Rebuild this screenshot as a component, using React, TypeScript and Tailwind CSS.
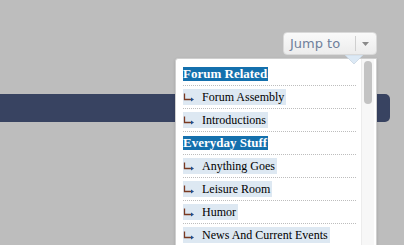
import React from "react";

/* =========================
   DATA
========================= */
const nodes = [
  { title: "Forum Related", kind: "cat" },
  { title: "Forum Assembly", kind: "forum" },
  { title: "Introductions", kind: "forum" },
  { title: "Everyday Stuff", kind: "cat" },
  { title: "Anything Goes", kind: "forum" },
  { title: "Leisure Room", kind: "forum" },
  { title: "Humor", kind: "forum" },
  { title: "News And Current Events", kind: "forum" },
];

/* =========================
   ICONS
========================= */
const ChildArrow = () => (
  <svg width="12" height="9" viewBox="0 0 12 9" className="shrink-0">
    <path d="M1.5 0.5 V6.5 H8" stroke="#7a3a22" strokeWidth="1.3" fill="none" />
    <path d="M8 4.5 L11 6.5 L8 8.5 Z" fill="#1d4f91" />
  </svg>
);

/* =========================
   MENU
========================= */
const JumpMenu = () => (
  <div className="absolute left-[175px] top-[58px] w-[202px] h-[200px] bg-white border border-[#cfcfcf] rounded-tl-[3px] shadow-[0_1px_3px_rgba(0,0,0,0.15)] overflow-hidden">
    <div className="flex">
      <ul className="w-[180px] pl-[7px] pt-[3px]">
        {nodes.map((n, i) => (
          <li
            key={i}
            className={`h-[23px] flex items-center ${
              i > 0 ? "border-t border-dotted border-[#bdbdbd]" : ""
            }`}
          >
            {n.kind === "cat" ? (
              <span className="bg-[#1470ad] text-white font-bold text-[13px] leading-[14px] pr-[1px]">
                {n.title}
              </span>
            ) : (
              <span className="bg-[#dde8f2] text-black text-[12px] leading-[16px] flex items-center pr-[2px]">
                <ChildArrow />
                <span className="ml-[7px]">{n.title}</span>
              </span>
            )}
          </li>
        ))}
      </ul>
      <div className="ml-auto mr-[2px] w-[13px] h-[200px] bg-[#f7f7f7] border-l border-[#ececec] pt-[2px] flex justify-center">
        <div className="w-[8px] h-[43px] rounded-full bg-[#c3c3c3]" />
      </div>
    </div>
  </div>
);

/* =========================
   MAIN
========================= */
export default function App() {
  return (
    <div
      className="relative w-[404px] h-[245px] overflow-hidden bg-[#bdbdbd] pt-[32px]"
      style={{ fontFamily: '"Liberation Serif", Georgia, serif' }}
    >
      <div className="flex justify-end pr-[27px]">
        <div className="relative flex items-center h-[23px] w-[94px] rounded-[4px] border border-[#d9d9d9] bg-gradient-to-b from-[#fafafa] to-[#ececec]">
          <span
            className="pl-[6px] text-[13px] text-[#6f7f9b]"
            style={{ fontFamily: '"DejaVu Sans", Verdana, sans-serif' }}
          >
            Jump to
          </span>
          <span className="ml-auto h-[15px] border-l border-[#cfcfcf]" />
          <svg width="20" height="8" viewBox="0 0 20 8">
            <path d="M6 2 L13 2 L9.5 6 Z" fill="#8a8a8a" />
          </svg>
          <svg
            width="20"
            height="10"
            viewBox="0 0 20 10"
            className="absolute left-[60px] top-[22px] z-10"
          >
            <path d="M1 0 L19 0 L10 9 Z" fill="#dce9f5" stroke="#c9d6e2" strokeWidth="0.8" />
          </svg>
        </div>
      </div>

      <div className="mt-[39px] h-[28px] w-[390px] bg-[#384361] rounded-r-[5px]" />

      <JumpMenu />
    </div>
  );
}
